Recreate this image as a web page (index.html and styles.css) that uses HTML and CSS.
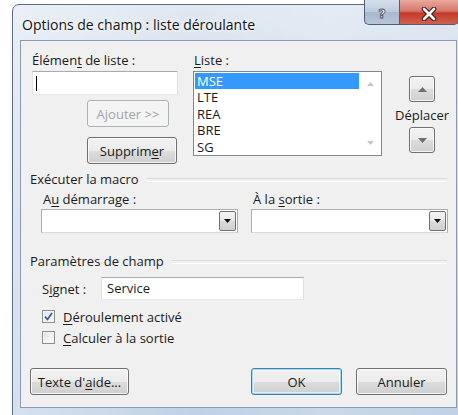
FILE: index.html
```html
<!DOCTYPE html>
<html lang="fr">
<head>
<meta charset="utf-8">
<title>Options de champ</title>
<link rel="stylesheet" href="styles.css">
</head>
<body>
<div class="window">
  <div class="titlebar">
    <span class="caption">Options de champ : liste déroulante</span>
    <div class="caption-buttons">
      <span class="cap-btn help"><span class="qmark">?</span></span>
      <span class="cap-btn close">
        <svg width="16" height="14" viewBox="0 0 16 14">
          <path d="M3 2 L13 12 M13 2 L3 12" stroke="#3b1a17" stroke-width="4.6" stroke-linecap="round"/>
          <path d="M3 2 L13 12 M13 2 L3 12" stroke="#ffffff" stroke-width="2.6" stroke-linecap="round"/>
        </svg>
      </span>
    </div>
  </div>

  <div class="client">
    <div class="top-row">
      <div class="item-col">
        <span class="lbl">Élémen<u>t</u> de liste :</span>
        <div class="textbox item-box"><span class="caret"></span></div>
        <button class="btn btn-add" disabled>Ajouter &gt;&gt;</button>
        <button class="btn btn-remove">Supprim<u>e</u>r</button>
      </div>

      <div class="list-col">
        <span class="lbl"><u>L</u>iste :</span>
        <div class="listbox">
          <ul class="items">
            <li class="selected">MSE</li>
            <li>LTE</li>
            <li>REA</li>
            <li>BRE</li>
            <li>SG</li>
          </ul>
          <div class="vscroll">
            <svg width="7" height="4" viewBox="0 0 7 4"><path d="M0 4 L3.5 0 L7 4 Z" fill="#c4c4c4"/></svg>
            <svg width="7" height="4" viewBox="0 0 7 4"><path d="M0 0 L3.5 4 L7 0 Z" fill="#c4c4c4"/></svg>
          </div>
        </div>
      </div>

      <div class="move-col">
        <button class="btn sq">
          <svg width="9" height="5" viewBox="0 0 9 5"><path d="M0 5 L4.5 0 L9 5 Z" fill="#6f6f6f"/></svg>
        </button>
        <span class="move-lbl">Déplacer</span>
        <button class="btn sq">
          <svg width="9" height="5" viewBox="0 0 9 5"><path d="M0 0 L4.5 5 L9 0 Z" fill="#6f6f6f"/></svg>
        </button>
      </div>
    </div>

    <div class="group-head"><span>Exécuter la macro</span></div>
    <div class="macro-row">
      <div class="macro-col">
        <span class="lbl">A<u>u</u> démarrage :</span>
        <div class="combo"><span class="drop"><svg width="7" height="4" viewBox="0 0 7 4"><path d="M0 0 L3.5 4 L7 0 Z" fill="#111"/></svg></span></div>
      </div>
      <div class="macro-col">
        <span class="lbl">À la <u>s</u>ortie :</span>
        <div class="combo"><span class="drop"><svg width="7" height="4" viewBox="0 0 7 4"><path d="M0 0 L3.5 4 L7 0 Z" fill="#111"/></svg></span></div>
      </div>
    </div>

    <div class="group-head second"><span>Paramètres de champ</span></div>
    <div class="settings">
      <div class="bookmark-row">
        <span class="lbl">S<u>i</u>gnet :</span>
        <div class="textbox bookmark-box">Service</div>
      </div>
      <div class="check-row">
        <span class="checkbox checked">
          <svg width="9" height="9" viewBox="0 0 9 9"><path d="M1 4.6 L3.5 7.4 L8 1" fill="none" stroke="#3d5a99" stroke-width="1.7"/></svg>
        </span>
        <span><u>D</u>éroulement activé</span>
      </div>
      <div class="check-row">
        <span class="checkbox"></span>
        <span><u>C</u>alculer à la sortie</span>
      </div>
    </div>

    <div class="footer">
      <button class="btn btn-help">Texte d'<u>a</u>ide...</button>
      <div class="footer-right">
        <button class="btn btn-ok">OK</button>
        <button class="btn btn-cancel">Annuler</button>
      </div>
    </div>
  </div>
</div>
</body>
</html>
```

FILE: styles.css
```css
* { box-sizing: border-box; }

html, body {
  margin: 0;
  padding: 0;
}

body {
  width: 458px;
  height: 415px;
  overflow: hidden;
  background: #ffffff;
  font-family: "Open Sans", "Noto Sans", sans-serif;
  font-size: 13px;
  color: #1b1b1b;
}

u {
  text-decoration-thickness: 1px;
  text-underline-offset: 2px;
}

/* ---- window frame ---- */
.window {
  margin: 4px 0 0 12px;
  width: 454px;
  height: 420px;
  border: 1px solid #5b6c83;
  border-radius: 7px 7px 0 0;
  background:
    linear-gradient(90deg, rgba(255,255,255,0.35) 0%, rgba(255,255,255,0) 40%, rgba(255,255,255,0.15) 70%, rgba(255,255,255,0) 100%),
    linear-gradient(180deg, #e0e8f2 0%, #cfdcec 30%, #bfd1e8 100%);
  padding: 0 7px;
  display: flex;
  flex-direction: column;
}

.titlebar {
  height: 35px;
  display: flex;
  align-items: flex-start;
}

.caption {
  flex: 1;
  padding: 10px 0 0 2px;
  font-size: 14px;
  color: #111;
  text-shadow: 0 0 6px #ffffff, 0 0 3px #ffffff;
}

.caption-buttons {
  display: flex;
  margin-top: -5px;
  margin-right: -1px;
}

.cap-btn {
  height: 25px;
  display: flex;
  align-items: center;
  justify-content: center;
  padding-top: 3px;
  border: 1px solid #4f5e72;
  border-top: none;
}

.help {
  width: 35px;
  border-radius: 0 0 0 5px;
  border-right: none;
  background: linear-gradient(180deg, #d5dfea 0%, #bccadb 50%, #a8b9cd 51%, #b6c6d8 100%);
}

.qmark {
  font-family: "DejaVu Sans", sans-serif;
  font-weight: bold;
  font-size: 13px;
  color: #ffffff;
  -webkit-text-stroke: 0.8px #3d4b5e;
}

.close {
  width: 60px;
  border-radius: 0 0 5px 0;
  background: linear-gradient(180deg, #e9a99f 0%, #d8786b 45%, #c2392a 55%, #d3604e 100%);
}

/* ---- client area ---- */
.client {
  width: 437px;
  height: 368px;
  background: #f0f0f0;
  border: 1px solid #8a9cb4;
  padding-top: 11px;
}

.lbl {
  display: block;
  height: 16px;
  line-height: 16px;
  white-space: nowrap;
}

.top-row {
  display: flex;
}

.item-col {
  width: 146px;
  margin-left: 11px;
  display: flex;
  flex-direction: column;
}

.textbox {
  background: #ffffff;
  border: 1px solid #abadb3;
  border-top-color: #a6aab1;
  border-bottom-color: #e3e9ef;
  border-left-color: #e2e3ea;
  border-right-color: #dbdfe6;
}

.item-box {
  margin-top: 3px;
  width: 146px;
  height: 24px;
  padding: 4px 3px;
}

.caret {
  display: block;
  width: 1px;
  height: 15px;
  background: #000;
}

/* ---- push buttons ---- */
.btn {
  font-family: inherit;
  font-size: 13px;
  color: #1b1b1b;
  border: 1px solid #707070;
  border-radius: 3px;
  background: linear-gradient(180deg, #f2f2f2 0%, #ebebeb 50%, #dddddd 51%, #cfcfcf 100%);
  box-shadow: inset 0 0 0 1px rgba(255,255,255,0.75);
  padding: 0;
  height: 27px;
  display: flex;
  align-items: center;
  justify-content: center;
}

.btn:disabled {
  color: #a3a3a3;
  border-color: #adb2b5;
  background: #f4f4f4;
  box-shadow: none;
}

.btn-add {
  width: 82px;
  margin: 5px 0 0 55px;
}

.btn-remove {
  width: 90px;
  margin: 10px 0 0 55px;
}

/* ---- list ---- */
.list-col {
  margin-left: 15px;
  width: 189px;
}

.list-col .lbl {
  padding-left: 1px;
}

.listbox {
  margin-top: 3px;
  height: 85px;
  border: 1px solid #828790;
  background: #ffffff;
  display: flex;
}

.items {
  list-style: none;
  margin: 0;
  padding: 1px 0 0 1px;
  flex: 1;
}

.items li {
  height: 16.4px;
  line-height: 16px;
  padding-left: 2px;
}

.items li.selected {
  background: #3399ff;
  color: #ffffff;
}

.vscroll {
  width: 22px;
  display: flex;
  flex-direction: column;
  align-items: center;
  justify-content: space-between;
  padding: 10px 0 10px;
}

.move-col {
  width: 58px;
  margin-left: 11px;
  display: flex;
  flex-direction: column;
  align-items: center;
  padding-top: 24px;
}

.btn.sq {
  width: 26px;
  height: 26px;
}

.move-lbl {
  height: 25px;
  line-height: 26px;
}

/* ---- group headers ---- */
.group-head {
  display: flex;
  align-items: center;
  height: 16px;
  margin: 7px 9px 0 9px;
}

.group-head span {
  white-space: nowrap;
  padding-right: 8px;
}

.group-head::after {
  content: "";
  flex: 1;
  height: 2px;
  border-top: 1px solid #dcdcdc;
  border-bottom: 1px solid #ffffff;
  margin-top: 2px;
}

.group-head.second {
  margin-top: 20px;
}

/* ---- macro combos ---- */
.macro-row {
  display: flex;
  gap: 13px;
  margin: 4px 0 0 20px;
}

.macro-col {
  width: 197px;
}

.macro-col .lbl {
  padding-left: 2px;
}

.combo {
  margin-top: 2px;
  height: 24px;
  background: #ffffff;
  border: 1px solid #abadb3;
  border-bottom-color: #d6d8dc;
  display: flex;
  justify-content: flex-end;
  padding: 1px;
}

.drop {
  width: 17px;
  height: 20px;
  border: 1px solid #707070;
  border-radius: 2px;
  background: linear-gradient(180deg, #f4f4f4 0%, #e9e9e9 50%, #dcdcdc 51%, #cfcfcf 100%);
  display: flex;
  align-items: center;
  justify-content: center;
}

/* ---- settings ---- */
.settings {
  margin: 8px 0 0 21px;
}

.bookmark-row {
  display: flex;
  align-items: center;
}

.bookmark-row .lbl {
  width: 59px;
}

.bookmark-box {
  width: 203px;
  height: 23px;
  line-height: 21px;
  padding-left: 5px;
}

.check-row {
  display: flex;
  align-items: center;
  height: 21px;
  gap: 8px;
}

.bookmark-row + .check-row {
  margin-top: 6px;
}

.checkbox {
  width: 13px;
  height: 13px;
  border: 1px solid #8e8f8f;
  background: linear-gradient(135deg, #dcdcdc 0%, #f4f4f4 60%, #ffffff 100%);
  box-shadow: inset 0 0 0 1px #f4f4f4;
  display: flex;
  align-items: center;
  justify-content: center;
}

.checkbox.checked {
  background: linear-gradient(135deg, #e2e6ee 0%, #f6f8fb 100%);
}

/* ---- footer ---- */
.footer {
  display: flex;
  justify-content: space-between;
  margin: 20px 9px 0 9px;
}

.footer-right {
  display: flex;
  gap: 14px;
}

.btn-help {
  width: 99px;
}

.btn-ok,
.btn-cancel {
  width: 91px;
}

.btn-ok {
  border-color: #3c7fb1;
  box-shadow: inset 0 0 0 1px #9fdcf6, inset 0 0 0 2px rgba(255,255,255,0.6);
}
```
